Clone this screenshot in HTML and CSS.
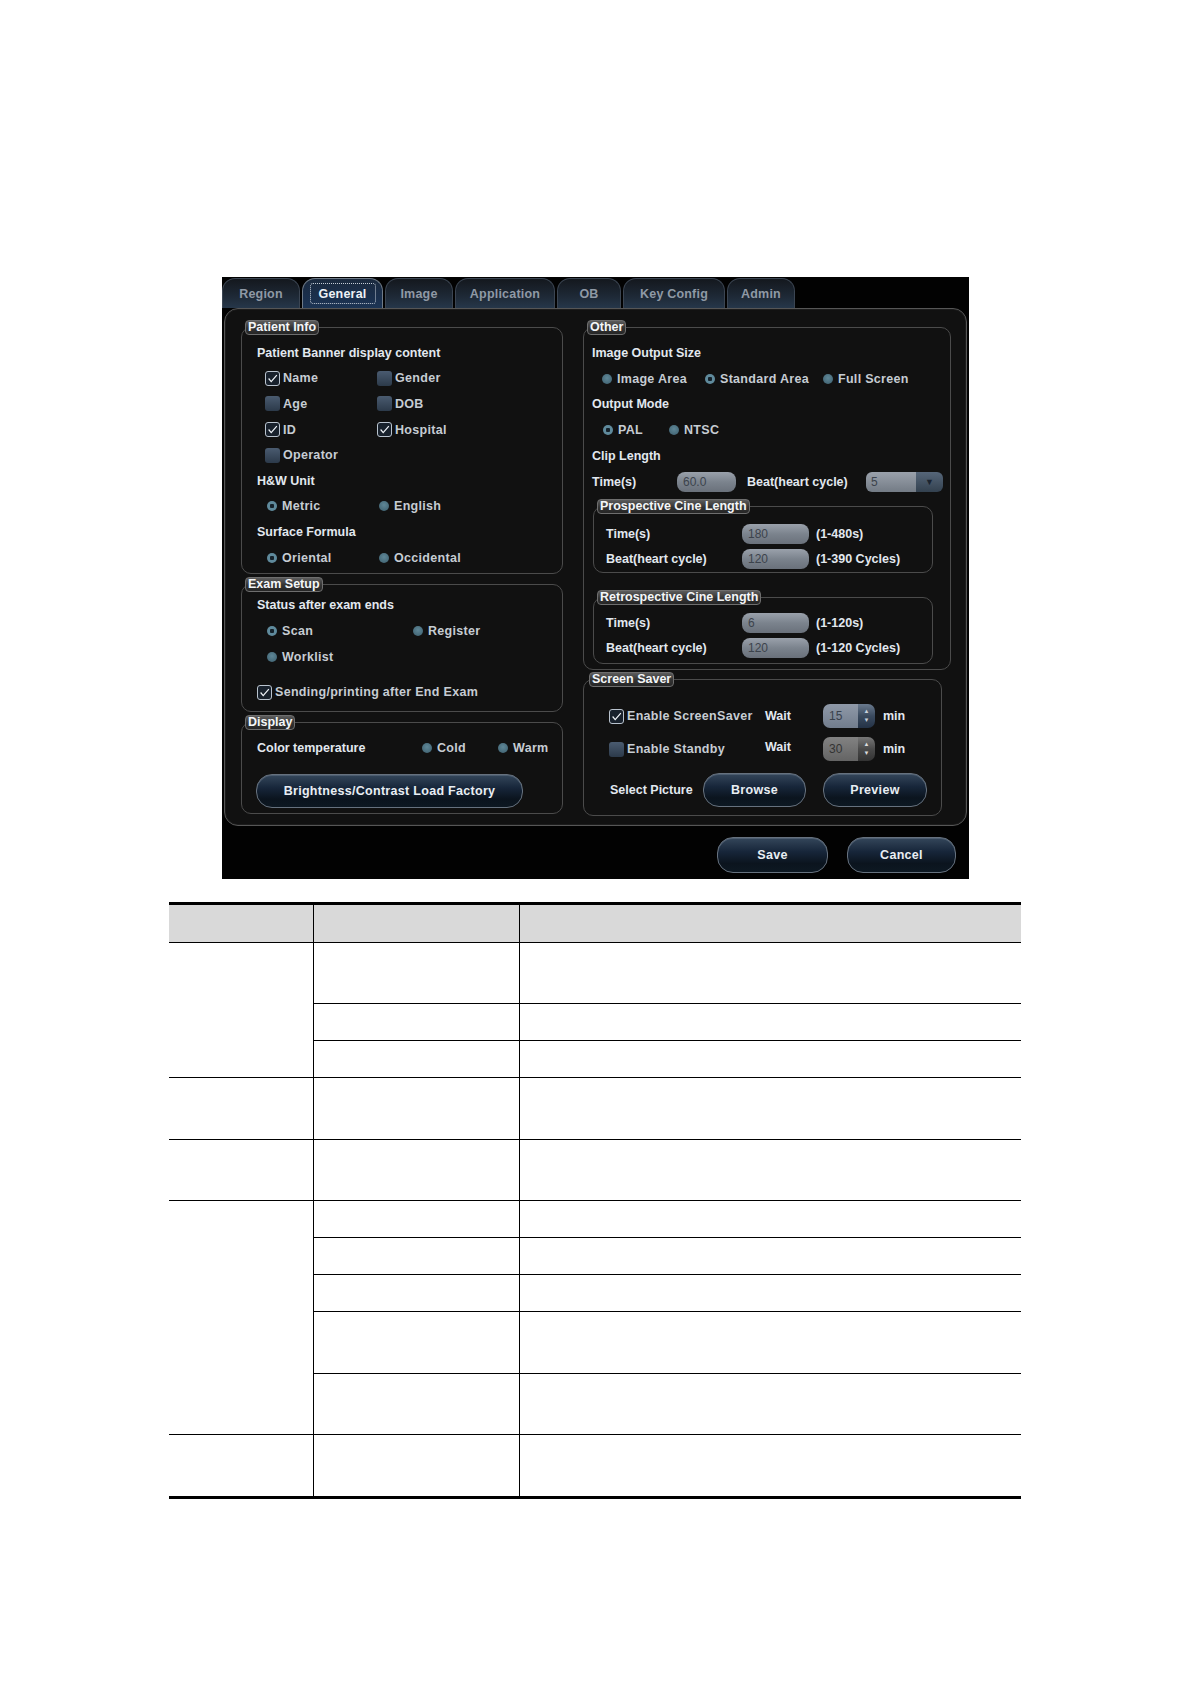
FILE: index.html
```html
<!DOCTYPE html>
<html>
<head>
<meta charset="utf-8">
<title>General settings</title>
<link rel="stylesheet" href="styles.css">
</head>
<body>
<div class="page">
  <div class="shot">
    <div class="tabs">
      <div class="tab t-region">Region</div>
      <div class="tab t-general active"><span class="focus">General</span></div>
      <div class="tab t-image">Image</div>
      <div class="tab t-app">Application</div>
      <div class="tab t-ob">OB</div>
      <div class="tab t-key">Key Config</div>
      <div class="tab t-admin">Admin</div>
    </div>
    <div class="frame">
      <div class="col col-left">
        <fieldset class="grp g-patient">
          <legend>Patient Info</legend>
          <div class="row title">Patient Banner display content</div>
          <div class="row cbrow">
            <span class="opt w112"><span class="box on"><svg viewBox="0 0 15 15"><polyline points="3,7.5 6,11 12.5,3.5"/></svg></span>Name</span>
            <span class="opt"><span class="box"></span>Gender</span>
          </div>
          <div class="row cbrow">
            <span class="opt w112"><span class="box"></span>Age</span>
            <span class="opt"><span class="box"></span>DOB</span>
          </div>
          <div class="row cbrow">
            <span class="opt w112"><span class="box on"><svg viewBox="0 0 15 15"><polyline points="3,7.5 6,11 12.5,3.5"/></svg></span>ID</span>
            <span class="opt"><span class="box on"><svg viewBox="0 0 15 15"><polyline points="3,7.5 6,11 12.5,3.5"/></svg></span>Hospital</span>
          </div>
          <div class="row cbrow">
            <span class="opt"><span class="box"></span>Operator</span>
          </div>
          <div class="row title">H&amp;W Unit</div>
          <div class="row rdrow">
            <span class="opt w112"><span class="dot sel"></span>Metric</span>
            <span class="opt"><span class="dot"></span>English</span>
          </div>
          <div class="row title">Surface Formula</div>
          <div class="row rdrow">
            <span class="opt w112"><span class="dot sel"></span>Oriental</span>
            <span class="opt"><span class="dot"></span>Occidental</span>
          </div>
        </fieldset>

        <fieldset class="grp g-exam">
          <legend>Exam Setup</legend>
          <div class="row26 title">Status after exam ends</div>
          <div class="row26 rdrow">
            <span class="opt w146"><span class="dot sel"></span>Scan</span>
            <span class="opt"><span class="dot"></span>Register</span>
          </div>
          <div class="row26 rdrow">
            <span class="opt"><span class="dot"></span>Worklist</span>
          </div>
          <div class="row26 sendrow">
            <span class="opt"><span class="box on"><svg viewBox="0 0 15 15"><polyline points="3,7.5 6,11 12.5,3.5"/></svg></span>Sending/printing after End Exam</span>
          </div>
        </fieldset>

        <fieldset class="grp g-display">
          <legend>Display</legend>
          <div class="row26 temprow">
            <span class="title w165">Color temperature</span>
            <span class="opt w76"><span class="dot"></span>Cold</span>
            <span class="opt"><span class="dot"></span>Warm</span>
          </div>
          <div class="btn b-bright">Brightness/Contrast Load Factory</div>
        </fieldset>
      </div>

      <div class="col col-right">
        <fieldset class="grp g-other">
          <legend>Other</legend>
          <div class="rrow title">Image Output Size</div>
          <div class="rrow sizerow">
            <span class="opt w105"><span class="dot"></span>Image Area</span>
            <span class="opt w118"><span class="dot sel"></span>Standard Area</span>
            <span class="opt"><span class="dot"></span>Full Screen</span>
          </div>
          <div class="rrow title">Output Mode</div>
          <div class="rrow moderow">
            <span class="opt w68"><span class="dot sel"></span>PAL</span>
            <span class="opt"><span class="dot"></span>NTSC</span>
          </div>
          <div class="rrow title">Clip Length</div>
          <div class="rrow cliprow">
            <span class="title w85">Time(s)</span>
            <span class="inp w59">60.0</span>
            <span class="title w119">Beat(heart cycle)</span>
            <span class="drop"><span class="dv">5</span><span class="da">&#9660;</span></span>
          </div>

          <fieldset class="grp sub g-pro">
            <legend>Prospective Cine Length</legend>
            <div class="srow">
              <span class="title w136">Time(s)</span>
              <span class="inp w67">180</span>
              <span class="range">(1-480s)</span>
            </div>
            <div class="srow">
              <span class="title w136">Beat(heart cycle)</span>
              <span class="inp w67">120</span>
              <span class="range">(1-390 Cycles)</span>
            </div>
          </fieldset>

          <fieldset class="grp sub g-retro">
            <legend>Retrospective Cine Length</legend>
            <div class="srow">
              <span class="title w136">Time(s)</span>
              <span class="inp w67">6</span>
              <span class="range">(1-120s)</span>
            </div>
            <div class="srow">
              <span class="title w136">Beat(heart cycle)</span>
              <span class="inp w67">120</span>
              <span class="range">(1-120 Cycles)</span>
            </div>
          </fieldset>
        </fieldset>

        <fieldset class="grp g-saver">
          <legend>Screen Saver</legend>
          <div class="ssrow">
            <span class="opt w156"><span class="box on"><svg viewBox="0 0 15 15"><polyline points="3,7.5 6,11 12.5,3.5"/></svg></span>Enable ScreenSaver</span>
            <span class="title w58">Wait</span>
            <span class="spin"><span class="sv">15</span><span class="sa"><i>&#9650;</i><i>&#9660;</i></span></span>
            <span class="title mins">min</span>
          </div>
          <div class="ssrow">
            <span class="opt w156"><span class="box"></span>Enable Standby</span>
            <span class="title w58 up">Wait</span>
            <span class="spin off"><span class="sv">30</span><span class="sa"><i>&#9650;</i><i>&#9660;</i></span></span>
            <span class="title mins">min</span>
          </div>
          <div class="picrow">
            <span class="title w93">Select Picture</span>
            <span class="btn b-browse">Browse</span>
            <span class="btn b-preview">Preview</span>
          </div>
        </fieldset>
      </div>
    </div>
    <div class="bottombar">
      <div class="btn b-save">Save</div>
      <div class="btn b-cancel">Cancel</div>
    </div>
  </div>

  <div class="table">
    <div class="c h c1"></div>
    <div class="c h cx"></div>
    <div class="c h cx"></div>

    <div class="c c1 span3"></div>
    <div class="c cx"></div><div class="c cx"></div>
    <div class="c cx"></div><div class="c cx"></div>
    <div class="c cx"></div><div class="c cx"></div>

    <div class="c c1"></div><div class="c cx"></div><div class="c cx"></div>
    <div class="c c1"></div><div class="c cx"></div><div class="c cx"></div>

    <div class="c c1 span5"></div>
    <div class="c cx"></div><div class="c cx"></div>
    <div class="c cx"></div><div class="c cx"></div>
    <div class="c cx"></div><div class="c cx"></div>
    <div class="c cx"></div><div class="c cx"></div>
    <div class="c cx"></div><div class="c cx"></div>

    <div class="c c1 last"></div><div class="c cx last"></div><div class="c cx last"></div>
  </div>
</div>
</body>
</html>
```

FILE: styles.css
```css
* { box-sizing: border-box; }
html, body { margin: 0; padding: 0; background: #fff; }
.page { padding-top: 277px; padding-bottom: 100px; }

.shot {
  margin-left: 222px;
  width: 747px;
  height: 602px;
  background: #020202;
  font-family: "Liberation Sans", Arial, sans-serif;
  font-weight: bold;
  font-size: 12.5px;
  color: #dfe5ec;
  display: flex;
  flex-direction: column;
}

/* tabs */
.tabs { display: flex; gap: 2px; height: 31px; padding-top: 1px; }
.tab {
  height: 30px;
  border: 1px solid #3b4552;
  border-bottom: none;
  border-radius: 13px 13px 0 0;
  background: linear-gradient(#14181e, #1e2936 60%, #26374a);
  color: #8f99a5;
  display: flex;
  align-items: center;
  justify-content: center;
  letter-spacing: 0.2px;
}
.tab.active {
  background: linear-gradient(#1b2a3e, #1a2f4c 60%, #1c3454);
  border-color: #6f7b88;
  color: #eef2f6;
}
.focus {
  border: 1px dotted #c3ccd6;
  border-radius: 3px;
  height: 21px;
  width: 66px;
  display: flex;
  align-items: center;
  justify-content: center;
}
.t-region { width: 78px; }
.t-general { width: 81px; }
.t-image { width: 68px; }
.t-app { width: 100px; }
.t-ob { width: 64px; }
.t-key { width: 102px; }
.t-admin { width: 68px; }

/* frame */
.frame {
  margin-left: 2px;
  width: 743px;
  height: 518px;
  border: 1px solid #565656;
  border-radius: 14px;
  background: #111;
  box-shadow: inset 0 0 0 1px #1c1c1c;
  display: flex;
  padding: 11px 15px 9px 16px;
  gap: 20px;
}
.col { display: flex; flex-direction: column; }
.col-left { width: 322px; gap: 3px; }
.col-right { width: 368px; gap: 2px; }

fieldset {
  margin: 0;
  padding: 0;
  min-width: 0;
}
.grp {
  border: 1px solid #4b4b4b;
  border-radius: 10px;
}
legend {
  padding: 0 2px;
  height: 15px;
  line-height: 13px;
  border: 1px solid #6e6e6e;
  border-radius: 4px;
  background: linear-gradient(#5c5c5c, #333 55%, #262626);
  color: #f4f6f8;
  font-size: 12.5px;
}
.g-patient > legend, .g-exam > legend, .g-display > legend { margin-left: -12px; }
.g-other > legend { margin-left: -5px; }
.g-pro > legend, .g-retro > legend { margin-left: -9px; }
.g-saver > legend { margin-left: -20px; }

.title { color: #e2e8ef; }
.opt { display: inline-flex; align-items: center; color: #c6ccd3; letter-spacing: 0.3px; }

.box {
  width: 15px; height: 15px;
  border-radius: 3px;
  margin-right: 3px;
  background: linear-gradient(#4a5b70, #2c3a4a);
  flex: none;
}
.box.on {
  background: #18212c;
  border: 1px solid #b9c3ce;
}
.box svg { display: block; width: 13px; height: 13px; }
.box polyline { fill: none; stroke: #f0f4f8; stroke-width: 1.4; }

.dot {
  width: 10px; height: 10px;
  border-radius: 50%;
  margin-right: 5px;
  background: radial-gradient(circle at 50% 40%, #5f8797, #3c5e6d);
  flex: none;
}
.dot.sel {
  background: radial-gradient(circle, #15222b 0 2px, #5f8a9c 2.5px);
}

.w112 { width: 112px; }
.w146 { width: 146px; }
.w165 { width: 165px; }
.w76 { width: 76px; }
.w105 { width: 105px; }
.w118 { width: 118px; }
.w68 { width: 68px; }
.w85 { width: 85px; }
.w119 { width: 119px; margin-left: 11px; }
.w136 { width: 136px; }
.w156 { width: 156px; }
.w58 { width: 58px; }
.w93 { width: 93px; }

/* left column */
.g-patient { height: 254px; padding: 5px 0 2px 15px; }
.row { height: 25.6px; display: flex; align-items: center; }
.cbrow { padding-left: 8px; }
.rdrow { padding-left: 10px; }

.g-exam { height: 135px; padding: 0 0 6px 15px; }
.row26 { height: 26px; display: flex; align-items: center; }
.sendrow { margin-top: 9px; padding-left: 0; }

.g-display { height: 99px; padding: 5px 0 7px 15px; }
.btn {
  display: flex;
  align-items: center;
  justify-content: center;
  border: 1px solid #66717e;
  border-radius: 16px;
  background: linear-gradient(#34465a 0%, #17263a 40%, #0b141e 75%, #0d1822 100%);
  box-shadow: inset 0 1px 0 #4c5d70;
  color: #e9eef3;
  letter-spacing: 0.3px;
}
.b-bright { width: 267px; height: 34px; margin-top: 13px; margin-left: -1px; }

/* right column */
.g-other { height: 350px; padding: 5px 0 4px 8px; }
.rrow { height: 25.8px; display: flex; align-items: center; }
.sizerow { padding-left: 10px; }
.sizerow .w105 { width: 103px; }
.moderow { padding-left: 11px; }
.moderow .w68 { width: 66px; }
.inp {
  height: 20px;
  border-radius: 8px;
  background: linear-gradient(#9aa1ab, #7b838d 50%, #6a717b);
  color: #3c434c;
  font-weight: normal;
  font-size: 12px;
  display: inline-flex;
  align-items: center;
  padding-left: 6px;
}
.w59 { width: 59px; }
.w67 { width: 67px; }
.drop {
  width: 77px; height: 20px;
  border-radius: 6px;
  overflow: hidden;
  display: inline-flex;
}
.dv {
  flex: 1;
  background: linear-gradient(#9aa1ab, #737b85);
  color: #3c434c;
  font-weight: normal;
  font-size: 12px;
  display: flex; align-items: center;
  padding-left: 5px;
}
.da {
  width: 27px;
  background: linear-gradient(#566679, #33414f);
  color: #1b2430;
  font-size: 9px;
  display: flex; align-items: center; justify-content: center;
}

.sub { width: 340px; margin-left: 1px; }
.g-pro { height: 74px; margin-top: 4px; padding: 8px 0 0 12px; }
.g-retro { height: 74px; margin-top: 17px; padding: 6px 0 0 12px; }
.srow { height: 25px; display: flex; align-items: center; }
.range { margin-left: 7px; color: #e2e8ef; }

.g-saver { width: 359px; height: 144px; padding: 14px 0 7px 25px; }
.ssrow { height: 30px; display: flex; align-items: center; margin-bottom: 3px; }
.up { margin-top: -4px; }
.spin {
  width: 52px; height: 24px;
  border-radius: 7px;
  overflow: hidden;
  display: inline-flex;
}
.sv {
  flex: 1;
  background: linear-gradient(#8f99a8, #727d8d);
  color: #39414c;
  font-weight: normal;
  font-size: 12px;
  display: flex; align-items: center; padding-left: 6px;
}
.sa {
  width: 17px;
  background: linear-gradient(#6a7a8e, #3a4a5e 50%, #243246);
  display: flex; flex-direction: column; align-items: center; justify-content: center;
  color: #c9d2dc;
  font-size: 6px;
  line-height: 9px;
}
.sa i { font-style: normal; }
.spin.off .sv { background: linear-gradient(#828282, #646464); color: #333; }
.spin.off .sa { background: linear-gradient(#777, #4a4a4a 50%, #333); color: #ddd; }
.mins { margin-left: 8px; }
.picrow { display: flex; align-items: center; margin-top: 9px; padding-left: 1px; }
.b-browse { width: 103px; height: 34px; }
.b-preview { width: 104px; height: 34px; margin-left: 17px; }

/* bottom bar */
.bottombar {
  flex: 1;
  display: flex;
  justify-content: flex-end;
  align-items: flex-start;
  padding: 11px 13px 0 0;
  gap: 19px;
}
.b-save { width: 111px; height: 36px; border-radius: 16px; }
.b-cancel { width: 109px; height: 36px; border-radius: 16px; }

/* table */
.table {
  margin-top: 23px;
  margin-left: 169px;
  width: 852px;
  display: grid;
  grid-template-columns: 144px 206px 502px;
  grid-template-rows: 38px 61px 37px 37px 62px 61px 37px 37px 37px 62px 61px 61px;
  border-top: 3px solid #000;
  border-bottom: 3px solid #000;
}
.c { border-bottom: 1px solid #000; }
.c.last { border-bottom: none; }
.cx { border-left: 1px solid #000; }
.h { background: #d9d9d9; }
.span3 { grid-row: span 3; }
.span5 { grid-row: span 5; }
```
